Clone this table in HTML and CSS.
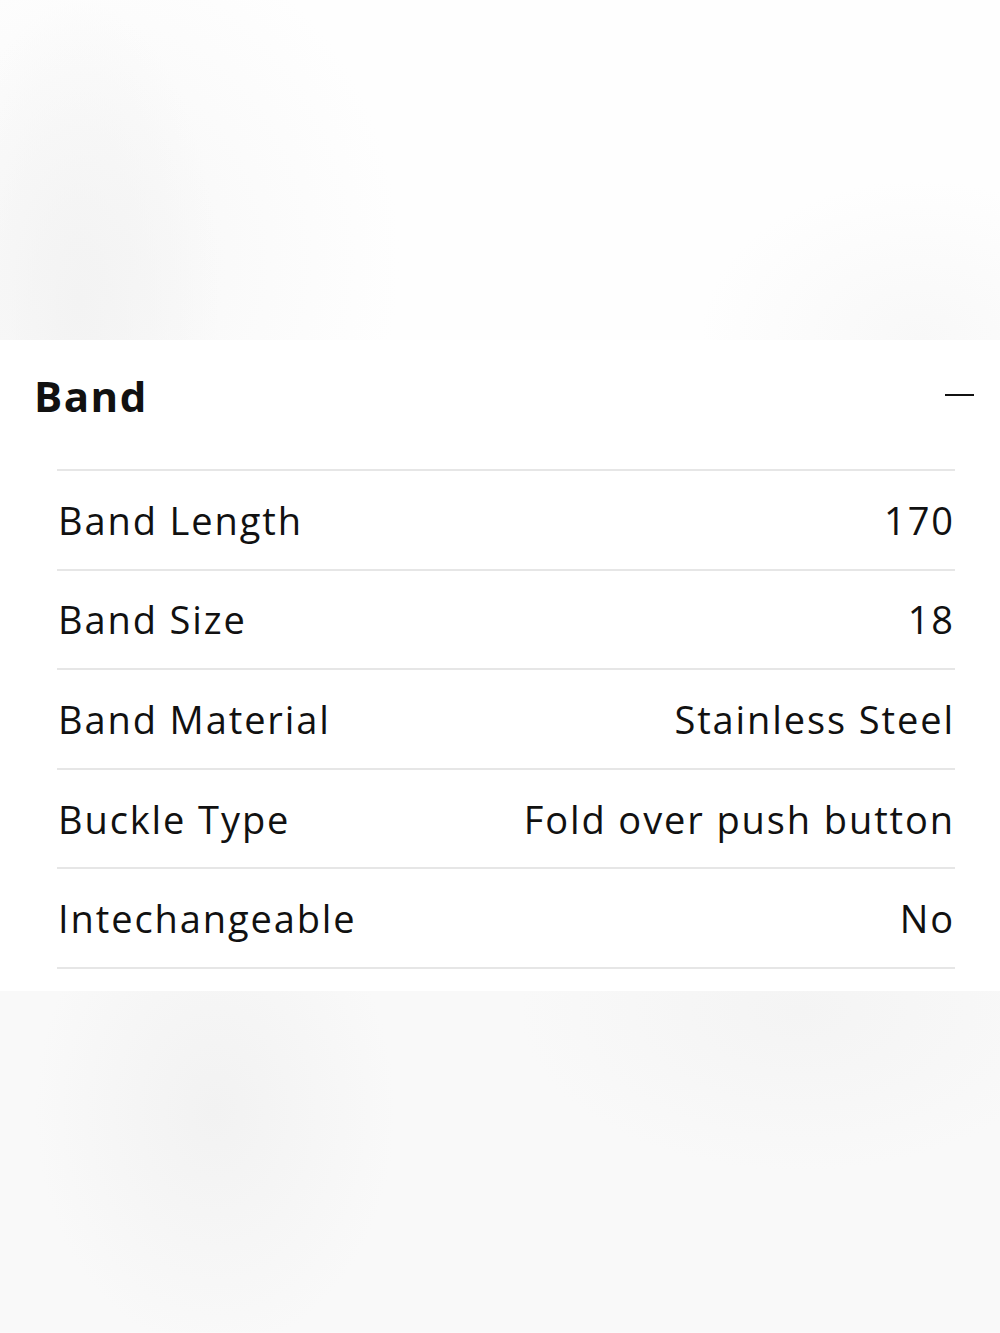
FILE: index.html
```html
<!DOCTYPE html>
<html lang="en">
<head>
  <meta charset="UTF-8" />
  <meta name="viewport" content="width=device-width, initial-scale=1.0"/>
  <title>Band - Specifications</title>
  <link rel="stylesheet" href="styles.css">
</head>
<body>
  <div class="backdrop top"></div>

  <section class="spec-panel">
    <div class="spec-head">
      <h2>Band</h2>
      <span class="toggle" aria-label="collapse"></span>
    </div>
    <ul class="spec-list">
      <li><span>Band Length</span><span>170</span></li>
      <li><span>Band Size</span><span>18</span></li>
      <li><span>Band Material</span><span>Stainless Steel</span></li>
      <li><span>Buckle Type</span><span>Fold over push button</span></li>
      <li><span>Intechangeable</span><span>No</span></li>
    </ul>
  </section>

  <div class="backdrop bottom"></div>
</body>
</html>
```

FILE: styles.css
```css
* { box-sizing: border-box; margin: 0; padding: 0; }
body {
  background: #fafafa;
  color: #111;
  font-family: "Open Sans", "Liberation Sans", sans-serif;
  min-height: 100vh;
}
.backdrop {
  background:
    radial-gradient(ellipse 140px 300px at 80px 300px, #f3f3f3, rgba(243,243,243,0)),
    radial-gradient(ellipse 300px 340px at 100px 260px, #f7f7f7, rgba(247,247,247,0)),
    radial-gradient(ellipse 220px 160px at 920px 340px, #f8f8f8, rgba(248,248,248,0)),
    #fefefe;
}
.backdrop.top { height: 340px; }
.backdrop.bottom {
  height: 341px;
  background:
    radial-gradient(ellipse 180px 240px at 215px 120px, #f2f2f2, rgba(242,242,242,0)),
    radial-gradient(ellipse 280px 160px at 800px 20px, #f4f4f4, rgba(244,244,244,0)),
    #f9f9f9;
}
.spec-panel {
  background: #fff;
  padding-bottom: 22px;
}
.spec-head {
  height: 110px;
  display: flex;
  align-items: center;
  justify-content: space-between;
  padding: 0 26px 0 34px;
}
.spec-head h2 {
  font-size: 42px;
  font-weight: 700;
  letter-spacing: 1.5px;
}
.toggle {
  width: 29px;
  height: 2px;
  background: #111;
}
.spec-list {
  list-style: none;
  margin: 19px 45px 0 57px;
  border-top: 2px solid #e6e6e6;
}
.spec-list li {
  height: 99.6px;
  border-bottom: 2px solid #e6e6e6;
  display: flex;
  align-items: center;
  justify-content: space-between;
  padding: 0 0 0 1px;
  font-size: 38px;
  letter-spacing: 1.9px;
}
```
